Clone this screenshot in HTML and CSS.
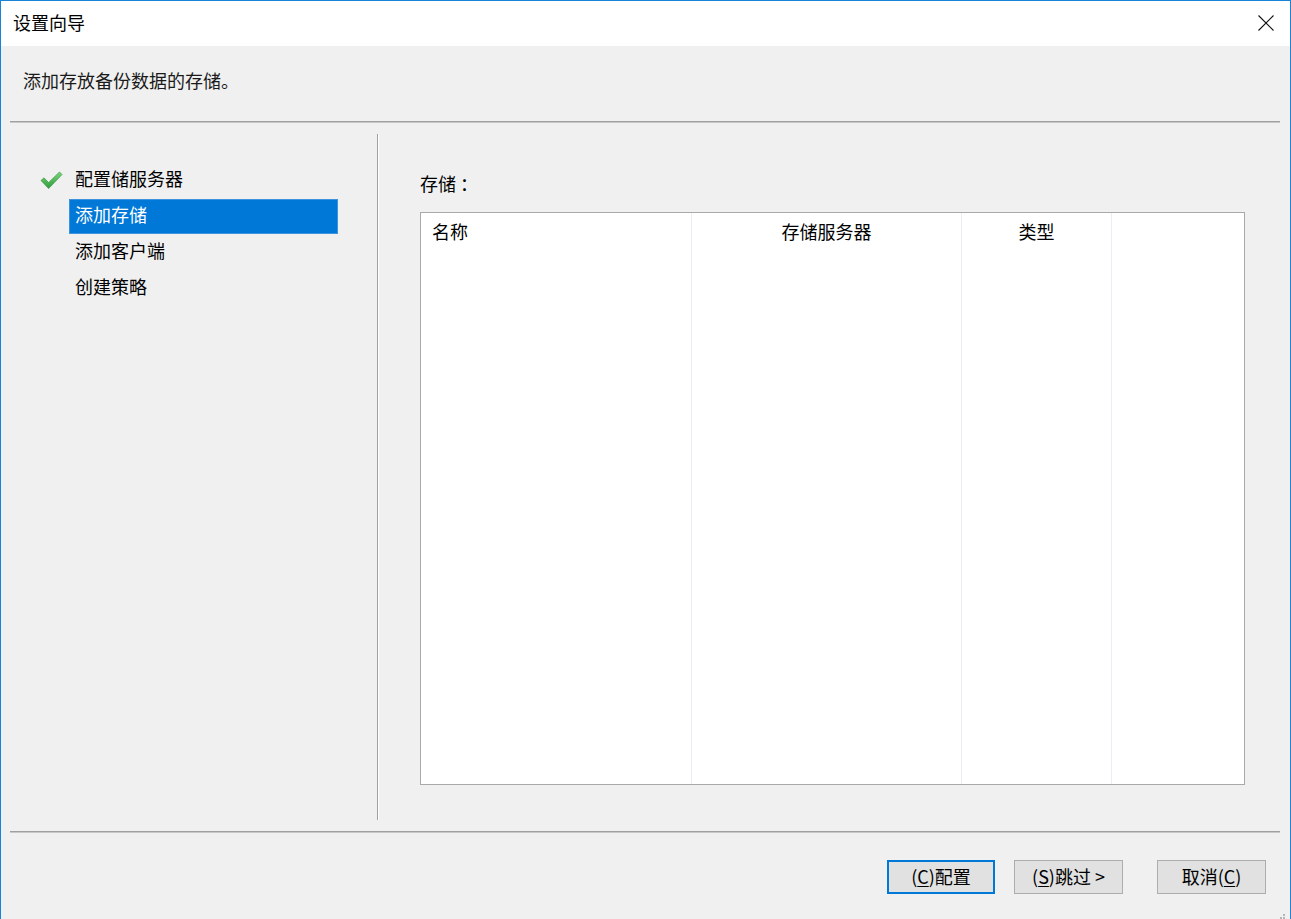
FILE: index.html
```html
<!DOCTYPE html>
<html lang="zh-CN">
<head>
<meta charset="utf-8">
<title>设置向导</title>
<link rel="stylesheet" href="styles.css">
</head>
<body>
<div class="window">
  <div class="titlebar">
    <span class="title">设置向导</span>
    <span class="close" aria-label="关闭">
      <svg width="16" height="16" viewBox="0 0 16 16"><path d="M0.5 0.5 L15.5 15.5 M15.5 0.5 L0.5 15.5" stroke="#111" stroke-width="1.1" fill="none"/></svg>
    </span>
  </div>
  <div class="body">
    <div class="subtitle">添加存放备份数据的存储。</div>
    <div class="hr"></div>
    <div class="main">
      <div class="nav">
        <div class="nav-item">
          <span class="nav-icon">
            <svg width="23" height="19" viewBox="0 0 23 19">
              <defs>
                <linearGradient id="g" x1="0" y1="0" x2="0" y2="1">
                  <stop offset="0" stop-color="#7ad67a"/>
                  <stop offset="1" stop-color="#2e9c3a"/>
                </linearGradient>
              </defs>
              <path d="M1 9.5 L4 6.8 L8.6 11.6 L19.5 1 L22 3.6 L8.6 17.6 Z" fill="url(#g)" stroke="#2c8a35" stroke-width="0.6"/>
            </svg>
          </span>
          <span class="nav-label">配置储服务器</span>
        </div>
        <div class="nav-item">
          <span class="nav-icon"></span>
          <span class="nav-label active">添加存储</span>
        </div>
        <div class="nav-item">
          <span class="nav-icon"></span>
          <span class="nav-label">添加客户端</span>
        </div>
        <div class="nav-item">
          <span class="nav-icon"></span>
          <span class="nav-label">创建策略</span>
        </div>
      </div>
      <div class="vdivider"></div>
      <div class="panel">
        <div class="panel-label">存储<span class="colon">：</span></div>
        <div class="list">
          <div class="col col-name"><div class="head left">名称</div></div>
          <div class="col col-server"><div class="head">存储服务器</div></div>
          <div class="col col-type"><div class="head">类型</div></div>
          <div class="col col-rest"><div class="head"></div></div>
        </div>
      </div>
    </div>
    <div class="hr"></div>
    <div class="footer">
      <button class="btn default">(<u>C</u>)配置</button>
      <button class="btn">(<u>S</u>)跳过 &gt;</button>
      <button class="btn cancel">取消(<u>C</u>)</button>
    </div>
    <div class="grip">
      <svg width="12" height="12" viewBox="0 0 12 12" fill="#b5b5b5">
        <rect x="9" y="1" width="2" height="2"/>
        <rect x="6" y="4" width="2" height="2"/><rect x="9" y="4" width="2" height="2"/>
        <rect x="3" y="7" width="2" height="2"/><rect x="6" y="7" width="2" height="2"/><rect x="9" y="7" width="2" height="2"/>
      </svg>
    </div>
  </div>
</div>
</body>
</html>
```

FILE: styles.css
```css
* { box-sizing: border-box; }
html, body {
  margin: 0;
  padding: 0;
  background: #f0f0f0;
}
body {
  font-family: "Noto Sans CJK SC", "Microsoft YaHei", sans-serif;
  font-size: 18px;
  color: #000;
}
.window {
  position: relative;
  width: 1291px;
  height: 919px;
  border: 1px solid #1883d7;
  border-bottom: none;
  display: flex;
  flex-direction: column;
  background: #f0f0f0;
}
.titlebar {
  height: 45px;
  background: #fff;
  display: flex;
  align-items: center;
  justify-content: space-between;
  padding-left: 12px;
  padding-right: 16px;
}
.title {
  font-size: 18px;
  line-height: 24px;
  margin-top: -4px;
}
.close {
  display: flex;
  width: 16px;
  height: 16px;
  margin-top: -1px;
}
.body {
  flex: 1;
  display: flex;
  flex-direction: column;
  position: relative;
}
.subtitle {
  height: 75px;
  padding-left: 22px;
  padding-top: 22px;
  line-height: 24px;
  color: #1a1a1a;
}
.hr {
  margin: 0 10px 0 9px;
  height: 2px;
  border-top: 1px solid #a0a0a0;
  border-bottom: 1px solid #c8c8c8;
}
.main {
  height: 708px;
  display: flex;
}
.nav {
  width: 376px;
  padding-top: 39px;
  padding-left: 39px;
}
.nav-item {
  display: flex;
  align-items: center;
  height: 36px;
}
.nav-icon {
  width: 29px;
  height: 19px;
  display: flex;
  align-items: center;
}
.nav-label {
  width: 269px;
  height: 35px;
  line-height: 29px;
  padding-left: 5px;
  border: 1px solid transparent;
}
.nav-label.active {
  background: #0078d7;
  border-color: #3d93dd;
  color: #fff;
}
.vdivider {
  width: 2px;
  margin: 11px 0;
  border-left: 1px solid #a0a0a0;
  border-right: 1px solid #ffffff;
}
.panel {
  flex: 1;
  padding-top: 48px;
  padding-left: 41px;
  padding-right: 45px;
}
.panel-label {
  height: 24px;
  line-height: 24px;
  margin-bottom: 17px;
}
.colon {
  padding-left: 4px;
}
.list {
  height: 573px;
  background: #fff;
  border: 1px solid #a9a9a9;
  display: flex;
}
.col {
  height: 100%;
  border-right: 1px solid #ececf4;
}
.col-name { width: 271px; }
.col-server { width: 270px; }
.col-type { width: 150px; }
.col-rest { flex: 1; border-right: none; }
.head {
  height: 36px;
  padding-top: 6px;
  line-height: 24px;
  text-align: center;
}
.head.left {
  text-align: left;
  padding-left: 11px;
}
.footer {
  display: flex;
  justify-content: flex-end;
  padding-top: 27px;
  padding-right: 24px;
}
.btn {
  font-family: inherit;
  font-size: 18px;
  color: #000;
  width: 109px;
  height: 34px;
  padding: 0 0 2px 0;
  line-height: 28px;
  background: #e1e1e1;
  border: 1px solid #adadad;
  margin-left: 19px;
}
.btn.default {
  border: 2px solid #0078d7;
  width: 108px;
}
.btn.cancel {
  margin-left: 34px;
}
.btn u {
  text-underline-offset: 2px;
}
.grip {
  position: absolute;
  right: 4px;
  bottom: 3px;
  width: 12px;
  height: 12px;
}
```
